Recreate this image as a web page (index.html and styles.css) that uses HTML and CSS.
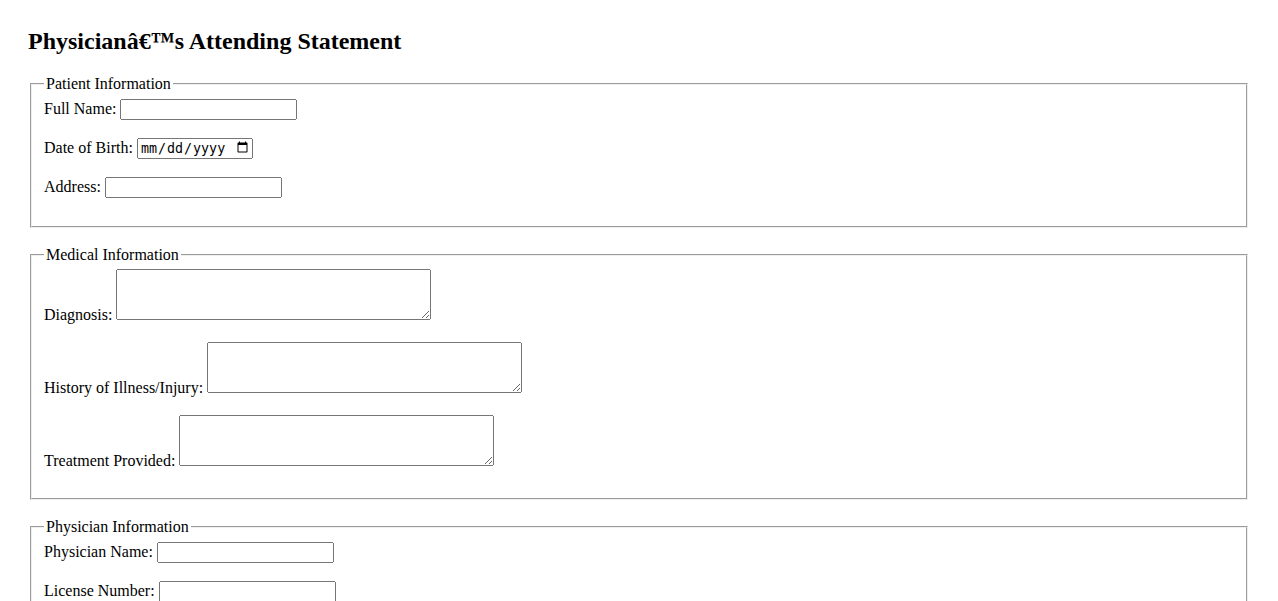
FILE: index.html
```html
<!DOCTYPE html>
<html lang="en">
<head>
<meta charset="utf-8">
<title>Physician's Attending Statement</title>
<link rel="stylesheet" href="styles.css">
</head>
<body>
<div class="page">
  <h2 class="title">Physicianâ€™s Attending Statement</h2>
  <form>
    <fieldset class="section">
      <legend>Patient Information</legend>
      <div class="field"><label for="name">Full Name:</label> <input class="text" type="text" id="name"></div>
      <div class="field"><label for="dob">Date of Birth:</label> <input class="date" type="date" id="dob"></div>
      <div class="field"><label for="addr">Address:</label> <input class="text" type="text" id="addr"></div>
    </fieldset>
    <fieldset class="section">
      <legend>Medical Information</legend>
      <div class="field"><label for="diag">Diagnosis:</label> <textarea class="area" id="diag"></textarea></div>
      <div class="field"><label for="hist">History of Illness/Injury:</label> <textarea class="area" id="hist"></textarea></div>
      <div class="field"><label for="treat">Treatment Provided:</label> <textarea class="area" id="treat"></textarea></div>
    </fieldset>
    <fieldset class="section">
      <legend>Physician Information</legend>
      <div class="field"><label for="doc">Physician Name:</label> <input class="text" type="text" id="doc"></div>
      <div class="field"><label for="lic">License Number:</label> <input class="text" type="text" id="lic"></div>
      <div class="field"><label for="sig">Signature:</label> <input class="text" type="text" id="sig"></div>
    </fieldset>
  </form>
</div>
</body>
</html>
```

FILE: styles.css
```css
body {
  margin: 8px;
  font-family: "Liberation Serif", "Times New Roman", serif;
  font-size: 16px;
  color: #000;
  background: #fff;
}
.page {
  padding: 20px;
}
.title {
  margin: 0 0 20px;
  font-size: 24px;
  font-weight: bold;
}
.section {
  margin: 0 2px 18px;
}
.field {
  margin-bottom: 18px;
}
.text {
  width: 177px;
  height: 21px;
  box-sizing: border-box;
}
.date {
  width: 116px;
  height: 21px;
  box-sizing: border-box;
}
.area {
  width: 315px;
  height: 51px;
  box-sizing: border-box;
}
```
